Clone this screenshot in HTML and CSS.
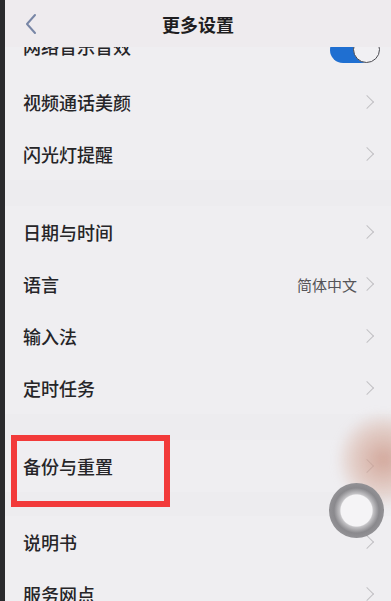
FILE: index.html
```html
<!DOCTYPE html>
<html lang="zh">
<head>
<meta charset="utf-8">
<title>更多设置</title>
<link rel="stylesheet" href="styles.css">
</head>
<body>
<div class="screen">
  <header class="topbar">
    <svg class="back" width="14" height="22" viewBox="0 0 14 22"><path d="M11 2 L3 11 L11 20" fill="none" stroke="#7886a6" stroke-width="2" stroke-linecap="round" stroke-linejoin="round"/></svg>
    <h1 class="title">更多设置</h1>
    <span></span>
  </header>
  <main class="list">
    <div class="partial">
      <div class="row row-inner">
        <span class="label">网络音乐音效</span>
        <span class="toggle"><span class="knob"></span></span>
      </div>
    </div>
    <div class="row"><span class="label">视频通话美颜</span><span class="chev"></span></div>
    <div class="row"><span class="label">闪光灯提醒</span><span class="chev"></span></div>
    <div class="gap"></div>
    <div class="row"><span class="label">日期与时间</span><span class="chev"></span></div>
    <div class="row"><span class="label">语言</span><span class="right"><span class="value">简体中文</span><span class="chev"></span></span></div>
    <div class="row"><span class="label">输入法</span><span class="chev"></span></div>
    <div class="row"><span class="label">定时任务</span><span class="chev"></span></div>
    <div class="gap"></div>
    <div class="row row-marked"><span class="label">备份与重置</span><span class="chev"></span><span class="mark"></span></div>
    <div class="gap gap-sm"></div>
    <div class="row"><span class="label">说明书</span><span class="chev"></span></div>
    <div class="row"><span class="label">服务网点</span><span class="chev"></span></div>
  </main>
  <div class="finger"></div>
  <div class="ring"></div>
</div>
</body>
</html>
```
FILE: styles.css
```css
html, body {
  margin: 0;
  padding: 0;
}
body {
  width: 391px;
  height: 601px;
  overflow: hidden;
  background: #edecef;
  font-family: "Noto Sans CJK SC", "Noto Sans", sans-serif;
  color: #242326;
}
.screen {
  position: relative;
  height: 601px;
  border-left: 5px solid #2a2a2d;
  background: #efeef1;
  display: flex;
  flex-direction: column;
  overflow: hidden;
}
.topbar {
  height: 47px;
  display: grid;
  grid-template-columns: 60px 1fr 60px;
  align-items: center;
  flex: none;
  position: relative;
  z-index: 2;
  background: #eeebee;
}
.back {
  margin-left: 19px;
}
.title {
  margin: 0;
  text-align: center;
  font-size: 18px;
  font-weight: 700;
  color: #1e1d20;
}
.list {
  display: flex;
  flex-direction: column;
}
.partial {
  height: 29px;
  overflow: hidden;
  flex: none;
}
.row-inner {
  margin-top: -27px;
}
.row {
  height: 52px;
  flex: none;
  display: flex;
  align-items: center;
  justify-content: space-between;
  padding: 0 15px 0 18px;
  position: relative;
}
.label {
  font-size: 18px;
  font-weight: 500;
  color: #262528;
}
.right {
  display: flex;
  align-items: center;
  gap: 5px;
}
.value {
  font-size: 15px;
  color: #555458;
}
.chev {
  width: 9px;
  height: 9px;
  border-top: 1.3px solid #c2c1c5;
  border-right: 1.3px solid #c2c1c5;
  transform: rotate(45deg);
  margin-right: 4px;
}
.gap {
  height: 26px;
  flex: none;
  background: #edecef;
}
.gap-sm {
  height: 24px;
}
.toggle {
  position: relative;
  width: 44px;
  height: 26px;
  border-radius: 13px;
  background: #1f6fd1;
  margin-right: 2px;
  margin-top: 8px;
}
.knob {
  position: absolute;
  right: -6px;
  top: -1px;
  width: 25px;
  height: 25px;
  border-radius: 50%;
  background: #f1f0f3;
  border: 1.5px solid #4a4a50;
}
.mark {
  position: absolute;
  left: 6px;
  top: -5px;
  width: 147px;
  height: 60px;
  border: 6px solid #f23a3a;
}
.finger {
  position: absolute;
  right: -40px;
  top: 412px;
  width: 95px;
  height: 95px;
  border-radius: 50%;
  background: radial-gradient(circle, rgba(205,155,140,0.85) 0%, rgba(215,175,160,0.5) 45%, rgba(238,236,239,0) 72%);
  filter: blur(4px);
}
.ring {
  position: absolute;
  left: 324px;
  top: 483px;
  width: 55px;
  height: 55px;
  border-radius: 50%;
  background: radial-gradient(circle, #f5f4f6 0%, #f5f4f6 40%, #c4c3c6 43%, #8a898d 58%, #97969a 78%, #c2c1c4 94%, rgba(238,238,240,0) 100%);
}
```
